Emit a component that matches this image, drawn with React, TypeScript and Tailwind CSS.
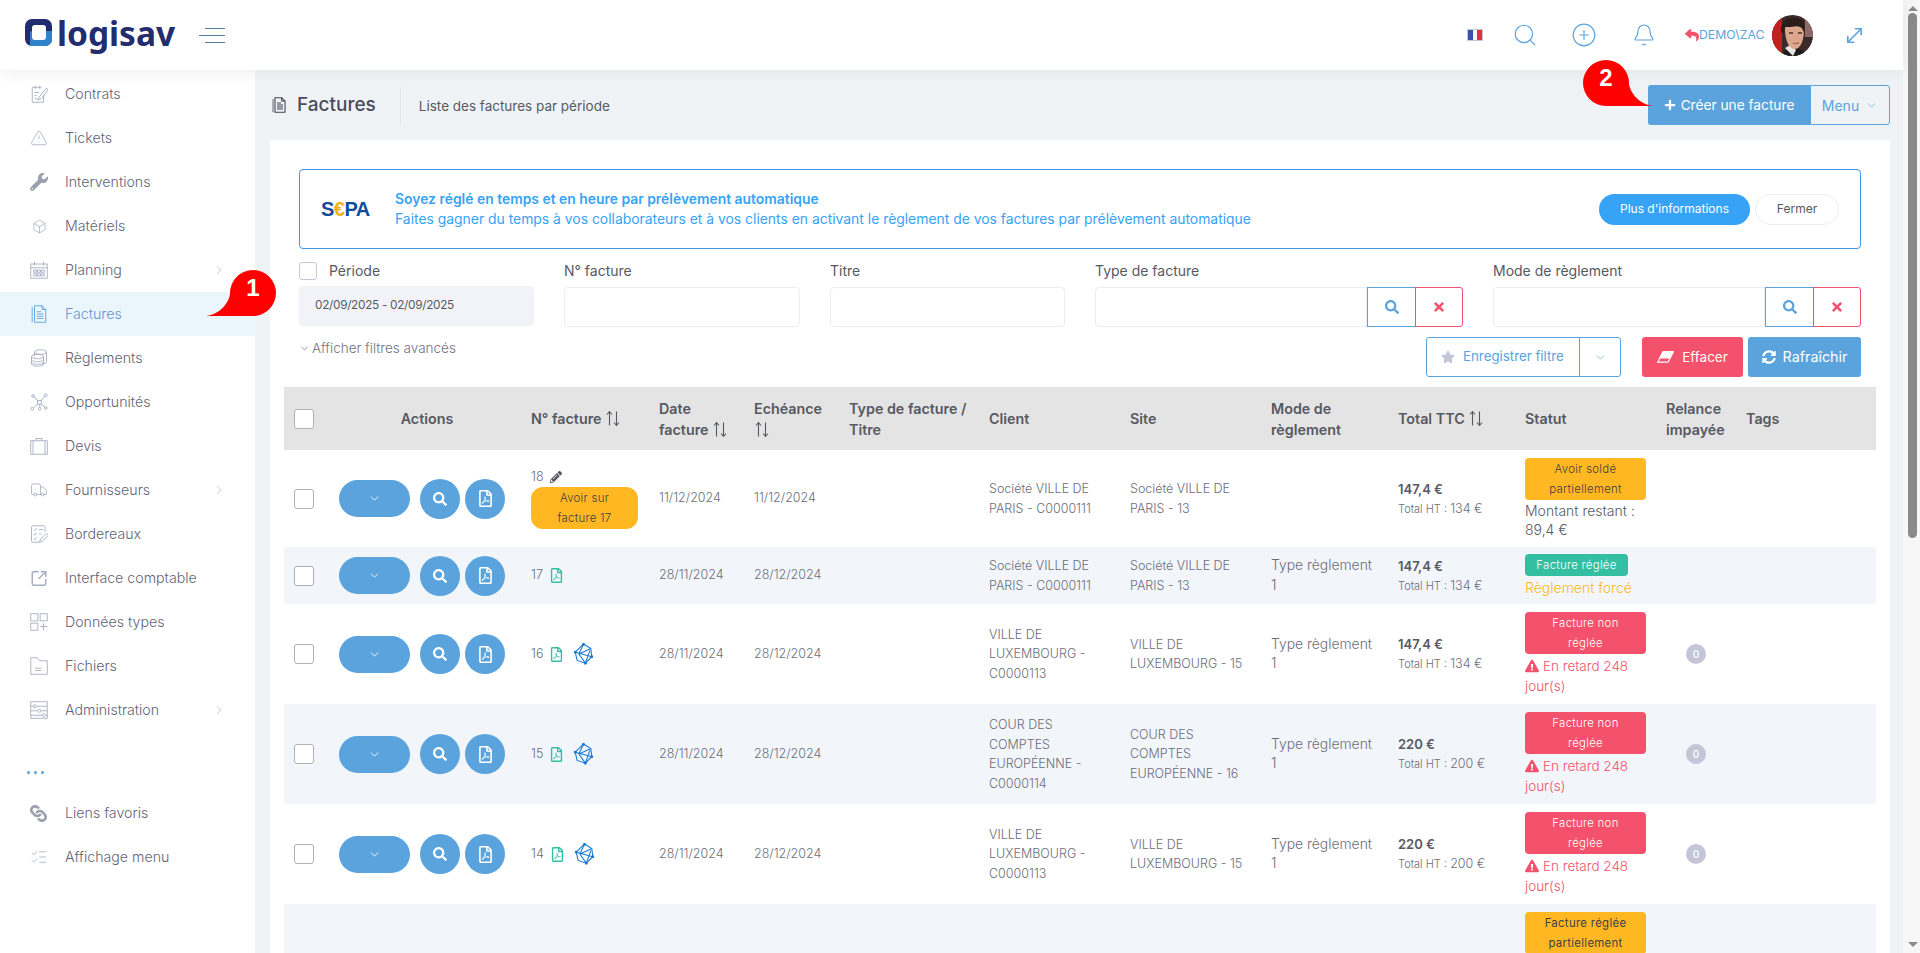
import { Box, ChevronDown, ChevronRight, CirclePlus, Bell, Search, ListChecks, SquareArrowOutUpRight, TriangleAlert, Truck, MoveDiagonal } from 'lucide-react';
import {
  FaExclamationTriangle,
  FaLink,
  FaPencilAlt,
  FaPlus,
  FaRegFilePdf,
  FaReply,
  FaSearch,
  FaStar,
  FaSyncAlt,
  FaTimes,
  FaWrench,
} from 'react-icons/fa';
import type { ReactNode } from 'react';

function Svg({ children, className = 'w-[18px] h-[18px]', width = '1.2' }: { children: ReactNode; className?: string; width?: string }) {
  return (
    <svg viewBox="0 0 24 24" fill="none" stroke="currentColor" strokeWidth={width} className={className}>
      {children}
    </svg>
  );
}

const lucideProps = { size: 20, strokeWidth: 1.1 };

const ContratIcon = () => (
  <Svg>
    <path d="M15 3H3v20h15v-9" />
    <path d="M7 1v4M13 1v4" />
    <path d="M6 10h6M6 14h3M6 18h3" />
    <path d="M22 4l-9 11-3 5 5-2 9-11z" />
  </Svg>
);
const CalendarIcon = () => (
  <Svg>
    <rect x="1" y="4" width="22" height="19" />
    <path d="M1 9h22M6 1v5M18 1v5" />
    <path d="M5 12h4v3H5zM10 12h4v3h-4zM15 12h4v3h-4zM5 17h4v3H5zM10 17h4v3h-4zM15 17h4v3h-4z" />
  </Svg>
);
const InvoiceIcon = ({ className, width }: { className?: string; width?: string }) => (
  <Svg className={className} width={width}>
    <path d="M3 3v20" strokeWidth="2" opacity=".6" />
    <path d="M6 1h10l5 5v17H6z" />
    <path d="M16 1v5h5M9 9h6M9 12h9M9 15h9M9 18h9" />
  </Svg>
);
const CoinsIcon = () => (
  <Svg>
    <ellipse cx="14" cy="4" rx="8" ry="3" />
    <path d="M6 4v6M22 4v13c0 1.5-3 3-6 3" />
    <ellipse cx="10" cy="10" rx="8" ry="3" />
    <path d="M2 10v10c0 1.600 3.500 3 8 3s8-1.400 8-3V10M2 14c0 1.600 3.500 3 8 3s8-1.400 8-3M2 17.500c0 1.600 3.500 3 8 3s8-1.400 8-3" />
  </Svg>
);
const NetworkIcon = () => (
  <Svg>
    <rect x="10" y="10" width="5" height="5" />
    <circle cx="4" cy="4" r="1.800" />
    <circle cx="21" cy="3" r="1.800" />
    <circle cx="3" cy="21" r="1.800" />
    <circle cx="13" cy="21" r="1.800" />
    <circle cx="21" cy="20" r="1.800" />
    <path d="M5 5l5 5M20 4l-5 6M4.500 20l5.500-5M13 15v4M15 15l5 4" />
  </Svg>
);
const CaseIcon = () => (
  <Svg>
    <rect x="1" y="5" width="22" height="18" />
    <path d="M8 5V2h8v3M4 5v18M20 5v18" />
  </Svg>
);
const SlipIcon = () => (
  <Svg>
    <path d="M20 9V3a2 2 0 0 0-2-2H4a2 2 0 0 0-2 2v18a2 2 0 0 0 2 2h8" />
    <path d="M5 6l1.500 1.500L9 4.500M5 12l1.500 1.500L9 10.500M5 18l1.500 1.500L9 16.500M12 6h5M12 12h3" />
    <path d="M22 11l-8 8-1.500 4 4-1.500 8-8z" />
  </Svg>
);
const TypesIcon = () => (
  <Svg>
    <rect x="1" y="1" width="9.500" height="9.500" />
    <rect x="13.500" y="1" width="9.500" height="9.500" />
    <rect x="1" y="13.500" width="9.500" height="9.500" />
    <path d="M18 13.500V23M13.500 18H23" />
  </Svg>
);
const FolderIcon = () => (
  <Svg>
    <path d="M1 1h9l3 4h10v18H1z" />
    <path d="M7 15h8M7 18h8" />
  </Svg>
);
const AdminIcon = () => (
  <Svg>
    <rect x="1" y="1" width="22" height="22" />
    <path d="M1 7h3M9 7h14M1 13h9M15 13h8M1 19h15M21 19h2" />
    <circle cx="6.500" cy="7" r="2" />
    <circle cx="12.500" cy="13" r="2" />
    <circle cx="18.500" cy="19" r="2" />
  </Svg>
);
const EraserIcon = () => (
  <svg viewBox="0 0 20 16" className="h-[14px] w-[17px]" stroke="white" strokeWidth="1.300" fill="none">
    <path d="M7 2h12l-6 12H1z" />
    <path d="M7 2h12l-3.500 7H3.500z" fill="white" />
  </svg>
);

type NavItem = { label: string; icon: ReactNode; arrow?: boolean; active?: boolean };

const navItems: NavItem[] = [
  { label: 'Contrats', icon: <ContratIcon /> },
  { label: 'Tickets', icon: <TriangleAlert {...lucideProps} /> },
  { label: 'Interventions', icon: <FaWrench size={18} className="text-[#9aa0ac]" /> },
  { label: 'Matériels', icon: <Box size={15} strokeWidth={1.2} className="ml-[2px]" /> },
  { label: 'Planning', icon: <CalendarIcon />, arrow: true },
  { label: 'Factures', icon: <InvoiceIcon />, active: true },
  { label: 'Règlements', icon: <CoinsIcon /> },
  { label: 'Opportunités', icon: <NetworkIcon /> },
  { label: 'Devis', icon: <CaseIcon /> },
  { label: 'Fournisseurs', icon: <Truck {...lucideProps} />, arrow: true },
  { label: 'Bordereaux', icon: <SlipIcon /> },
  { label: 'Interface comptable', icon: <SquareArrowOutUpRight size={19} strokeWidth={2} /> },
  { label: 'Données types', icon: <TypesIcon /> },
  { label: 'Fichiers', icon: <FolderIcon /> },
  { label: 'Administration', icon: <AdminIcon />, arrow: true },
];

const bottomItems: NavItem[] = [
  { label: 'Liens favoris', icon: <FaLink size={17} className="rotate-90 text-[#9aa0ac]" /> },
  { label: 'Affichage menu', icon: <ListChecks {...lucideProps} /> },
];

function NavRow({ item }: { item: NavItem }) {
  return (
    <div className={`flex h-[44px] items-center pl-[30px] pr-[29px] ${item.active ? 'bg-[#ebf5fc]' : ''}`}>
      <span className={`flex w-[18px] items-center ${item.active ? 'text-[#5aa3dc]' : 'text-[#a7aec2]'}`}>{item.icon}</span>
      <span className={`ml-[17px] flex-1 text-[14.200px] font-light ${item.active ? 'text-[#5f95d3]' : 'text-[#5f6378]'}`}>{item.label}</span>
      {item.arrow && <ChevronRight size={14} strokeWidth={1.2} className="text-[#a7aec2]" />}
    </div>
  );
}

function Sidebar() {
  return (
    <aside className="w-[255px] shrink-0 bg-white pt-[2px]">
      {navItems.map((item) => (
        <NavRow key={item.label} item={item} />
      ))}
      <div className="flex h-[59px] items-end gap-[4px] pb-[17px] pl-[27px]">
        <span className="h-[3px] w-[3px] rounded-full bg-[#5aa3dc]" />
        <span className="h-[3px] w-[3px] rounded-full bg-[#5aa3dc]" />
        <span className="h-[3px] w-[3px] rounded-full bg-[#5aa3dc]" />
      </div>
      {bottomItems.map((item) => (
        <NavRow key={item.label} item={item} />
      ))}
    </aside>
  );
}

function Avatar() {
  return (
    <svg viewBox="0 0 41 41" className="h-[41px] w-[41px] rounded-full">
      <rect width="41" height="41" fill="#3b2a2a" />
      <path d="M0 0h10v41H0z" fill="#c0201f" />
      <path d="M33 0h8v22h-8z" fill="#8c6b66" />
      <path d="M10 41c1-6 7-8 12-8s11 3 12 8z" fill="#1f1c1e" />
      <path d="M13 33l5-3 6 5-3 6z" fill="#e9e6e4" />
      <path d="M13 13c0-3 19-3 19 2 0 9-3 19-9 19s-10-8-10-21z" fill="#dca78c" />
      <path d="M9 17C8 6 16 2 24 3c8 1 10 8 8 15-1-4-3-7-7-7-4 1-9 1-12 1-1 2-1 4-1 7z" fill="#2a1d1a" />
      <path d="M17 18h4M26 18h4" stroke="#4a2f25" strokeWidth="1.500" />
      <path d="M21 28c2 1 4 1 6-.5" stroke="#a5604f" strokeWidth="1.200" fill="none" />
    </svg>
  );
}

function Header() {
  return (
    <header className="relative z-10 flex h-[70px] items-center bg-white pl-[25px] pr-[37px] shadow-[0_1px_15px_rgba(69,65,78,0.1)]">
      <div className="relative h-[27px] w-[27px] -translate-y-[3px] rounded-[7px] bg-[#232c6e]">
        <span className="absolute bottom-0 right-0 h-[15px] w-[22px] rounded-br-[7px] rounded-tl-[2px] bg-[#2f84c9]" />
        <span className="absolute left-[7px] top-[6px] h-[15px] w-[14px] rounded-[3px] bg-white" />
      </div>
      <span className="relative ml-[5px] w-[120px] -translate-y-[1px] font-['Noto_Sans',sans-serif] text-[33.500px] font-bold leading-none tracking-[0px] text-[#232c6e]">
        logisav
      </span>
      <div className="ml-[22px] flex w-[26px] flex-col items-end gap-[6px]">
        <span className="h-px w-[20px] bg-[#5b7a99]" />
        <span className="h-px w-[26px] bg-[#5b7a99]" />
        <span className="h-px w-[20px] bg-[#5b7a99]" />
      </div>
      <div className="ml-auto flex items-center">
        <span className="flex h-[12px] w-[16px] border border-[#c7c7d8]">
          <span className="flex-1 bg-[#3b4fa8]" />
          <span className="flex-1 bg-[#f5f5f5]" />
          <span className="flex-1 bg-[#e0323c]" />
        </span>
        <Search size={26} strokeWidth={1.1} className="ml-[29px] text-[#5aa3dc]" />
        <CirclePlus size={26} strokeWidth={1.1} className="ml-[33px] text-[#5aa3dc]" />
        <Bell size={24} strokeWidth={1.1} className="ml-[35px] text-[#5aa3dc]" />
        <FaReply size={14} className="ml-[29px] text-[#f4516c]" />
        <span className="w-[63px] whitespace-nowrap text-center text-[12.300px] text-[#5aa3dc]">DEMO\ZAC</span>
        <span className="ml-[10px]">
          <Avatar />
        </span>
        <MoveDiagonal size={23} strokeWidth={1.7} className="ml-[30px] text-[#5aa3dc]" />
      </div>
    </header>
  );
}

function SubHeader() {
  return (
    <div className="flex h-[70px] items-center">
      <InvoiceIcon className="ml-px h-[18px] w-[16px] text-[#3f4250]" width="1.600" />
      <span className="ml-[10px] text-[19px] font-medium text-[#4a4d5c]">Factures</span>
      <span className="ml-[24px] h-[38px] w-px bg-[#e2e5ec]" />
      <span className="ml-[18px] mt-[3px] text-[13.500px] text-[#575962]">Liste des factures par période</span>
      <div className="ml-auto flex h-[40px]">
        <button className="flex w-[162px] items-center justify-center gap-[5px] rounded-l-[3px] bg-[#5aa3dc] text-[13.700px] text-white">
          <FaPlus size={12} />
          Créer une facture
        </button>
        <button className="flex w-[80px] items-center justify-center gap-[6px] rounded-r-[3px] border border-[#5aa3dc] text-[14px] text-[#5aa3dc]">
          Menu
          <ChevronDown size={13} strokeWidth={1.2} />
        </button>
      </div>
    </div>
  );
}

function Banner() {
  return (
    <div className="flex h-[80px] items-center rounded-[4px] border border-[#3f98e6] pl-[21px] pr-[21px]">
      <span className="w-[74px] font-['Liberation_Sans',sans-serif] text-[20px] font-bold tracking-[-0.5px] text-[#0f4c9c]">
        S<span className="text-[#eeb215]">€</span>PA
      </span>
      <div className="flex-1 text-[13.900px] leading-[20px] text-[#36a3f7]">
        <div className="font-semibold">Soyez réglé en temps et en heure par prélèvement automatique</div>
        <div>Faites gagner du temps à vos collaborateurs et à vos clients en activant le règlement de vos factures par prélèvement automatique</div>
      </div>
      <button className="h-[31px] w-[151px] rounded-full bg-[#36a3f7] text-[12px] text-white">Plus d'informations</button>
      <button className="ml-[5px] h-[31px] w-[84px] rounded-full border border-[#ebedf2] text-[12px] text-[#575962]">Fermer</button>
    </div>
  );
}

function Label({ children }: { children: ReactNode }) {
  return <div className="h-[18px] text-[14px] leading-[18px] text-[#575962]">{children}</div>;
}

function SearchField({ label, width }: { label: string; width: string }) {
  return (
    <div className={width}>
      <Label>{label}</Label>
      <div className="mt-[7px] flex h-[40px]">
        <input readOnly className="min-w-0 flex-1 rounded-l-[4px] border border-[#ebedf2] bg-white" />
        <button className="flex w-[49px] items-center justify-center border border-[#5aa3dc] text-[#5aa3dc]">
          <FaSearch size={14} />
        </button>
        <button className="-ml-px flex w-[48px] items-center justify-center rounded-r-[3px] border border-[#f4516c] text-[#f4516c]">
          <FaTimes size={14} />
        </button>
      </div>
    </div>
  );
}

function TextField({ label, width }: { label: string; width: string }) {
  return (
    <div className={width}>
      <Label>{label}</Label>
      <input readOnly className="mt-[7px] h-[40px] w-full rounded-[4px] border border-[#ebedf2] bg-white" />
    </div>
  );
}

function Filters() {
  return (
    <>
      <div className="mt-[13px] flex gap-[30px]">
        <div className="w-[235px]">
          <div className="flex items-center">
            <input type="checkbox" className="h-[18px] w-[18px] appearance-none rounded-[3px] border border-[#c4c5d6] bg-white" />
            <span className="ml-[12px] text-[14px] leading-[18px] text-[#575962]">Période</span>
          </div>
          <div className="mt-[6px] flex h-[40px] items-center rounded-[4px] bg-[#f2f3f8] pl-[16px] text-[11.800px] tracking-[-0.3px] text-[#575962]">
            02/09/2025 - 02/09/2025
          </div>
        </div>
        <TextField label="N° facture" width="w-[236px]" />
        <TextField label="Titre" width="w-[235px]" />
        <SearchField label="Type de facture" width="w-[368px]" />
        <SearchField label="Mode de règlement" width="w-[368px]" />
      </div>
      <div className="mt-[10px] flex h-[40px] items-start">
        <div className="mt-[1px] flex items-center gap-[2px] text-[13.500px] font-light text-[#6f7285]">
          <ChevronDown size={11} strokeWidth={1.6} />
          Afficher filtres avancés
        </div>
        <div className="ml-auto flex h-[40px] w-[195px] rounded-[3px] border border-[#5aa3dc]">
          <span className="flex flex-1 items-center gap-[8px] pl-[14px] text-[13.300px] text-[#5aa3dc]">
            <FaStar size={14} className="text-[#c4c5d6]" />
            Enregistrer filtre
          </span>
          <span className="flex w-[41px] items-center justify-center border-l border-[#5aa3dc] text-[#5aa3dc]">
            <ChevronDown size={13} strokeWidth={1.2} />
          </span>
        </div>
        <button className="ml-[21px] flex h-[40px] w-[101px] items-center justify-center gap-[8px] rounded-[3px] bg-[#f4516c] text-[13.500px] text-white">
          <EraserIcon />
          Effacer
        </button>
        <button className="ml-[5px] flex h-[40px] w-[113px] items-center justify-center gap-[7px] rounded-[3px] bg-[#5aa3dc] text-[14.300px] text-white">
          <FaSyncAlt size={14} />
          Rafraîchir
        </button>
      </div>
    </>
  );
}

const SortArrows = () => (
  <svg viewBox="0 0 16 16" className="inline-block h-[17px] w-[16px] align-[-3px] text-[#575962]" fill="none" stroke="currentColor" strokeWidth="1.100">
    <path d="M4.500 15V1.500M2 4l2.500-3L7 4M11.500 1v13.500M9 12l2.500 3 2.500-3" />
  </svg>
);

const PolyIcon = () => (
  <svg viewBox="0 0 20 24" className="ml-[3px] h-[22px] w-[21px] text-[#1b7ad6]" fill="none" stroke="currentColor" strokeWidth="1.200">
    <path d="M10 1l8 5 1 9-7 7-9-3-2-9z" />
    <path d="M10 1L5 12l7 10M1 10l18 5M18 6L5 12M12 22l5-14" />
    <circle cx="10" cy="1.500" r="1" fill="currentColor" />
    <circle cx="1" cy="10" r="1" fill="currentColor" />
    <circle cx="12" cy="22" r="1" fill="currentColor" />
    <circle cx="19" cy="15" r="1" fill="currentColor" />
  </svg>
);

type Status = { label: string[]; color: string; short?: boolean };

type InvoiceRow = {
  num: string;
  height: string;
  striped?: boolean;
  date: string;
  due: string;
  client: string[];
  site: string[];
  mode: string[];
  ttc: string;
  ht: string;
  status: Status;
  note?: ReactNode;
  relance?: boolean;
  edit?: boolean;
  pdf?: boolean;
  poly?: boolean;
};

const RED = 'bg-[#f4516c] text-white';
const YEL = 'bg-[#ffb822] text-[#3f4047]';
const GRN = 'bg-[#34bfa3] text-white';

const Late = () => (
  <div className="text-[13.500px] font-light leading-[20px] text-[#f4516c]">
    <FaExclamationTriangle size={14} className="mr-[4px] inline-block align-[-2px]" />
    En retard 248
    <br />
    jour(s)
  </div>
);

const invoices: InvoiceRow[] = [
  {
    num: '18',
    height: 'h-[97px]',
    edit: true,
    date: '11/12/2024',
    due: '11/12/2024',
    client: ['Société VILLE DE', 'PARIS - C0000111'],
    site: ['Société VILLE DE', 'PARIS - 13'],
    mode: [],
    ttc: '147,4 €',
    ht: '134 €',
    status: { label: ['Avoir soldé', 'partiellement'], color: YEL },
    note: <div className="text-[14px] font-light leading-[18.500px] text-[#575962]">Montant restant :<br />89,4 €</div>,
  },
  {
    num: '17',
    height: 'h-[57px]',
    striped: true,
    pdf: true,
    date: '28/11/2024',
    due: '28/12/2024',
    client: ['Société VILLE DE', 'PARIS - C0000111'],
    site: ['Société VILLE DE', 'PARIS - 13'],
    mode: ['Type règlement', '1'],
    ttc: '147,4 €',
    ht: '134 €',
    status: { label: ['Facture réglée'], color: GRN, short: true },
    note: <div className="text-[14px] font-light leading-[20px] text-[#ffb822]">Règlement forcé</div>,
  },
  {
    num: '16',
    height: 'h-[100px]',
    pdf: true,
    poly: true,
    date: '28/11/2024',
    due: '28/12/2024',
    client: ['VILLE DE', 'LUXEMBOURG -', 'C0000113'],
    site: ['VILLE DE', 'LUXEMBOURG - 15'],
    mode: ['Type règlement', '1'],
    ttc: '147,4 €',
    ht: '134 €',
    status: { label: ['Facture non', 'réglée'], color: RED },
    note: <Late />,
    relance: true,
  },
  {
    num: '15',
    height: 'h-[100px]',
    striped: true,
    pdf: true,
    poly: true,
    date: '28/11/2024',
    due: '28/12/2024',
    client: ['COUR DES', 'COMPTES', 'EUROPÉENNE -', 'C0000114'],
    site: ['COUR DES', 'COMPTES', 'EUROPÉENNE - 16'],
    mode: ['Type règlement', '1'],
    ttc: '220 €',
    ht: '200 €',
    status: { label: ['Facture non', 'réglée'], color: RED },
    note: <Late />,
    relance: true,
  },
  {
    num: '14',
    height: 'h-[100px]',
    pdf: true,
    poly: true,
    date: '28/11/2024',
    due: '28/12/2024',
    client: ['VILLE DE', 'LUXEMBOURG -', 'C0000113'],
    site: ['VILLE DE', 'LUXEMBOURG - 15'],
    mode: ['Type règlement', '1'],
    ttc: '220 €',
    ht: '200 €',
    status: { label: ['Facture non', 'réglée'], color: RED },
    note: <Late />,
    relance: true,
  },
];

function Lines({ lines, className = '' }: { lines: string[]; className?: string }) {
  return (
    <div className={`whitespace-nowrap leading-[19.500px] ${className}`}>
      {lines.map((l) => (
        <div key={l}>{l}</div>
      ))}
    </div>
  );
}

function RowActions() {
  return (
    <div className="flex items-center pl-[10px]">
      <button className="flex h-[37px] w-[71px] items-center justify-center rounded-full bg-[#5aa3dc] text-white">
        <ChevronDown size={13} strokeWidth={1.6} />
      </button>
      <button className="ml-[10px] flex h-[40px] w-[40px] items-center justify-center rounded-full bg-[#5aa3dc] text-white">
        <FaSearch size={14} />
      </button>
      <button className="ml-[5px] flex h-[40px] w-[40px] items-center justify-center rounded-full bg-[#5aa3dc] text-white">
        <FaRegFilePdf size={17} />
      </button>
    </div>
  );
}

function StatusBadge({ status }: { status: Status }) {
  return (
    <div className={`rounded-[4px] py-px text-center text-[11.400px] leading-[20px] tracking-[0.3px] ${status.color} ${status.short ? 'w-[103px]' : 'w-[121px]'}`}>
      {status.label.map((l) => (
        <div key={l}>{l}</div>
      ))}
    </div>
  );
}

function InvoiceTr({ row }: { row: InvoiceRow }) {
  const cell = 'px-[12px] align-middle';
  return (
    <tr className={`${row.height} ${row.striped ? 'bg-[#f2f5fa]' : 'bg-white'} text-[12.500px] font-light text-[#6b6e7c]`}>
      <td className="pl-[10px] align-middle">
        <input type="checkbox" className="block h-[20px] w-[20px] appearance-none rounded-[3px] border border-[#b0b0b0] bg-white" />
      </td>
      <td className="align-middle">
        <RowActions />
      </td>
      <td className={cell}>
        <div className="flex items-center gap-[6px]">
          <span>{row.num}</span>
          {row.edit && <FaPencilAlt size={12} className="text-[#575962]" />}
          {row.pdf && <FaRegFilePdf size={15} className="text-[#34bfa3]" />}
          {row.poly && <PolyIcon />}
        </div>
        {row.edit && (
          <div className="mt-px w-[107px] rounded-[12px] bg-[#ffb822] py-px text-center text-[11.400px] leading-[20px] tracking-[0.3px] text-[#3f4047]">
            Avoir sur
            <br />
            facture 17
          </div>
        )}
      </td>
      <td className={cell}>{row.date}</td>
      <td className={cell}>{row.due}</td>
      <td className={cell} />
      <td className={cell}>
        <Lines lines={row.client} />
      </td>
      <td className={cell}>
        <Lines lines={row.site} />
      </td>
      <td className={cell}>
        <Lines lines={row.mode} className="text-[13.900px]" />
      </td>
      <td className={cell}>
        <div className="text-[13px] font-semibold leading-[20px] text-[#575962]">{row.ttc}</div>
        <div className="text-[11px] leading-[20px]">
          Total HT : <span className="text-[12.500px]">{row.ht}</span>
        </div>
      </td>
      <td className={cell}>
        <StatusBadge status={row.status} />
        <div className="mt-[2px]">{row.note}</div>
      </td>
      <td className="pl-[32px] align-middle">
        {row.relance && (
          <span className="flex h-[20px] w-[20px] items-center justify-center rounded-full bg-[#c4c5d6] text-[10px] font-medium text-white">0</span>
        )}
      </td>
      <td />
    </tr>
  );
}

function InvoiceTable() {
  const th = 'px-[12px] text-left align-middle font-semibold';
  return (
    <table className="mt-[10px] -ml-[15px] w-[1592px] table-fixed border-collapse">
      <colgroup>
        <col className="w-[45px]" />
        <col className="w-[190px]" />
        <col className="w-[128px]" />
        <col className="w-[95px]" />
        <col className="w-[95px]" />
        <col className="w-[140px]" />
        <col className="w-[141px]" />
        <col className="w-[141px]" />
        <col className="w-[127px]" />
        <col className="w-[127px]" />
        <col className="w-[141px]" />
        <col className="w-[80px]" />
        <col className="w-[142px]" />
      </colgroup>
      <thead>
        <tr className="h-[63px] bg-[#e4e4e4] text-[14.300px] leading-[21px] text-[#575962]">
          <th className="pl-[10px] align-middle">
            <input type="checkbox" className="block h-[20px] w-[20px] appearance-none rounded-[3px] border border-[#b0b0b0] bg-white" />
          </th>
          <th className="pl-[6px] text-center align-middle font-semibold">Actions</th>
          <th className={th}>
            <span className="whitespace-nowrap">
              N° facture <SortArrows />
            </span>
          </th>
          <th className={th}>
            Date
            <br />
            <span className="whitespace-nowrap">
              facture <SortArrows />
            </span>
          </th>
          <th className={th}>
            Echéance
            <br />
            <SortArrows />
          </th>
          <th className={th}>
            <span className="whitespace-nowrap">Type de facture /</span>
            <br />
            Titre
          </th>
          <th className={th}>Client</th>
          <th className={th}>Site</th>
          <th className={th}>
            Mode de
            <br />
            règlement
          </th>
          <th className={th}>
            <span className="whitespace-nowrap">
              Total TTC <SortArrows />
            </span>
          </th>
          <th className={th}>Statut</th>
          <th className={th}>
            Relance
            <br />
            impayée
          </th>
          <th className={th}>Tags</th>
        </tr>
      </thead>
      <tbody>
        {invoices.map((row) => (
          <InvoiceTr key={row.num} row={row} />
        ))}
        <tr className="h-[60px] bg-[#f2f5fa]">
          <td colSpan={10} />
          <td className="px-[12px] pt-[8px] align-top">
            <StatusBadge status={{ label: ['Facture réglée', 'partiellement'], color: YEL }} />
          </td>
          <td colSpan={2} />
        </tr>
      </tbody>
    </table>
  );
}

function Bubble({ n, flip, className }: { n: string; flip?: boolean; className: string }) {
  return (
    <div className={`absolute z-20 h-[46px] w-[70px] ${className}`}>
      <svg viewBox="0 0 70 46" className="h-full w-full">
        {flip ? (
          <path d="M70 46C54 44 46 30 46 23A23 23 0 1 0 23 46Z" fill="#ff0000" />
        ) : (
          <path d="M0 46C16 44 24 30 24 23A23 23 0 1 1 47 46Z" fill="#ff0000" />
        )}
      </svg>
      <span className={`absolute top-[4px] w-[46px] text-center font-['Liberation_Sans',sans-serif] text-[24px] font-bold leading-[28px] text-white ${flip ? 'left-0' : 'left-[24px]'}`}>
        {n}
      </span>
    </div>
  );
}

function Scrollbar() {
  return (
    <div className="flex h-full w-[17px] shrink-0 flex-col items-center bg-[#f7f7f7] pl-[4px] pr-[2px]">
      <span className="mt-[6px] h-0 w-0 border-x-[5px] border-b-[5px] border-x-transparent border-b-[#8a8a8a]" />
      <span className="mt-[2px] h-[525px] w-[9px] rounded-full bg-[#8a8a8a]" />
      <span className="mt-auto mb-[6px] h-0 w-0 border-x-[5px] border-t-[5px] border-x-transparent border-t-[#8a8a8a]" />
    </div>
  );
}

export default function App() {
  return (
    <div className="relative flex h-[953px] overflow-hidden bg-white font-['Inter',sans-serif]">
      <div className="flex min-w-0 flex-1 flex-col">
        <Header />
        <div className="flex min-h-0 flex-1">
          <Sidebar />
          <main className="min-w-0 flex-1 bg-[#f0f3f6] pl-[15px] pr-[13px]">
            <SubHeader />
            <section className="h-full bg-white pl-[29px] pr-[29px] pt-[29px]">
              <Banner />
              <Filters />
              <InvoiceTable />
            </section>
          </main>
        </div>
      </div>
      <Scrollbar />
      <Bubble n="1" className="left-[206px] top-[270px]" />
      <Bubble n="2" flip className="left-[1583px] top-[60px]" />
    </div>
  );
}
